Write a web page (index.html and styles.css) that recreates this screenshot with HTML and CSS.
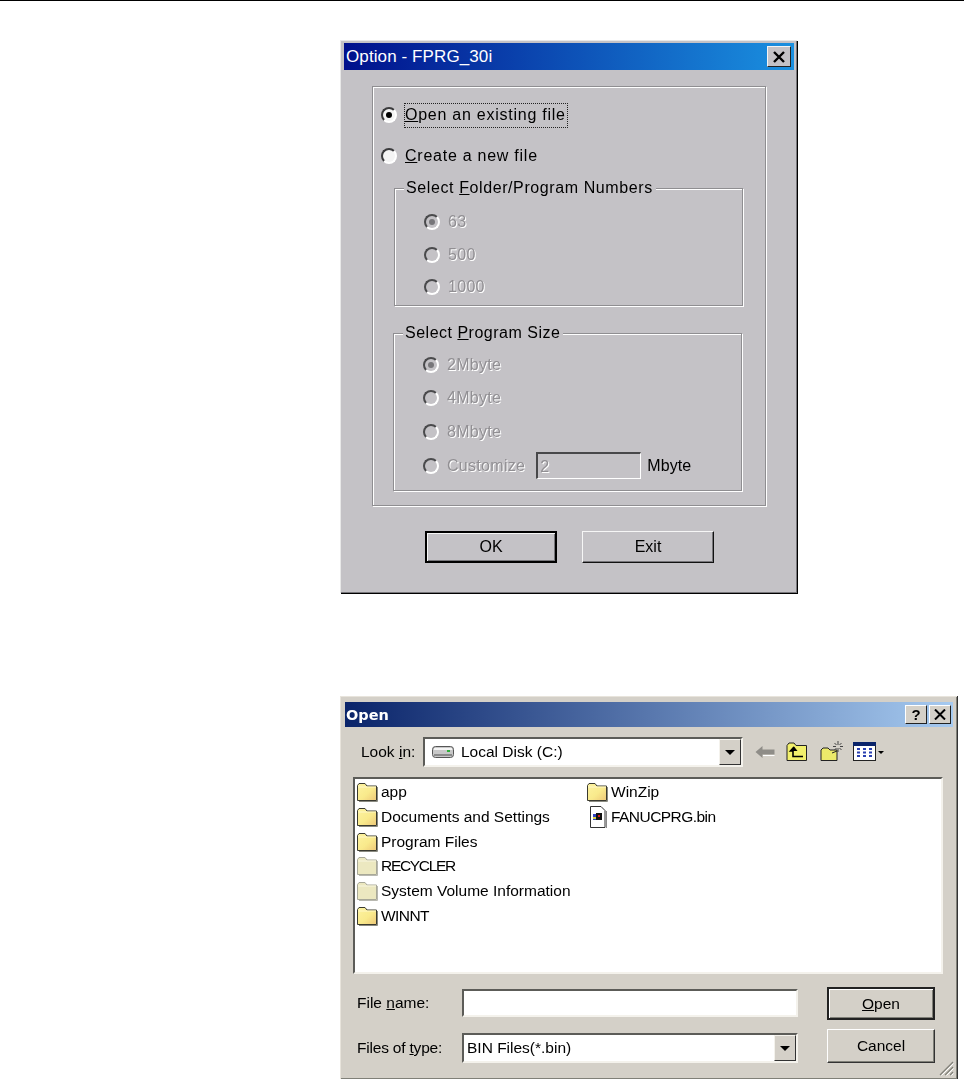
FILE: index.html
```html
<!DOCTYPE html>
<html lang="en">
<head>
    <meta charset="UTF-8">
    <meta name="viewport" content="width=device-width, initial-scale=1.0">
    <title>FPRG_30i dialogs</title>
    <link rel="stylesheet" href="styles.css">
</head>
<body>

<svg class="defs" width="0" height="0">
    <defs>
        <linearGradient id="folder-fill" x1="0" y1="0" x2="1" y2="1">
            <stop offset="0" stop-color="#fdf3a0"/>
            <stop offset="0.55" stop-color="#f9ea8c"/>
            <stop offset="1" stop-color="#eec878"/>
        </linearGradient>
    </defs>
    <symbol id="folder" viewBox="0 0 22 20">
        <path d="M1.5 18.5V3.5L3 1.5H9L11 4H20.5V18.5Z" fill="url(#folder-fill)" stroke="#3a3a30"/>
        <path d="M2 5H20" stroke="#fff8c8"/>
        <path d="M21.5 5V19.5H3" fill="none" stroke="#8a8a80"/>
    </symbol>
    <symbol id="folder-pale" viewBox="0 0 22 20">
        <path d="M1.5 18.5V3.5L3 1.5H9L11 4H20.5V18.5Z" fill="#ece8c0" stroke="#a8a898"/>
        <path d="M2 5H20" stroke="#f8f6e0"/>
        <path d="M21.5 5V19.5H3" fill="none" stroke="#b8b8b0"/>
    </symbol>
</svg>

<div class="top-rule"></div>

<div class="page">
    <div class="option-win">
        <div class="option-title">
            <span>Option - FPRG_30i</span>
            <button class="close-btn" type="button">
                <svg width="14" height="12" viewBox="0 0 14 12"><path d="M2 1L12 11M12 1L2 11" stroke="#000" stroke-width="2.4"/></svg>
            </button>
        </div>

        <div class="option-frame">
            <div class="radio-row top-row">
                <span class="radio checked"></span>
                <span class="focus-label"><u>O</u>pen an existing file</span>
            </div>
            <div class="radio-row top-row second">
                <span class="radio"></span>
                <span class="radio-label"><u>C</u>reate a new file</span>
            </div>

            <fieldset class="group first-group">
                <legend>Select <u>F</u>older/Program Numbers</legend>
                <div class="radio-row off"><span class="radio checked"></span><span>63</span></div>
                <div class="radio-row off"><span class="radio"></span><span>500</span></div>
                <div class="radio-row off"><span class="radio"></span><span>1000</span></div>
            </fieldset>

            <fieldset class="group size-group">
                <legend>Select <u>P</u>rogram Size</legend>
                <div class="radio-row off"><span class="radio checked"></span><span>2Mbyte</span></div>
                <div class="radio-row off"><span class="radio"></span><span>4Mbyte</span></div>
                <div class="radio-row off"><span class="radio"></span><span>8Mbyte</span></div>
                <div class="radio-row off">
                    <span class="radio"></span><span>Customize</span>
                    <span class="size-input">2</span>
                    <span class="size-unit">Mbyte</span>
                </div>
            </fieldset>
        </div>

        <div class="option-buttons">
            <button class="opt-btn default" type="button">OK</button>
            <button class="opt-btn" type="button">Exit</button>
        </div>
    </div>

    <div class="open-win">
        <div class="open-title">
            <span>Open</span>
            <div class="title-btns">
                <button class="cap-btn" type="button">?</button>
                <button class="cap-btn" type="button">
                    <svg width="12" height="11" viewBox="0 0 12 11"><path d="M1 0.5L11 10.5M11 0.5L1 10.5" stroke="#000" stroke-width="2"/></svg>
                </button>
            </div>
        </div>

        <div class="look-row">
            <span class="look-label">Look <u>i</u>n:</span>
            <div class="combo look-combo">
                <svg class="drive" width="23" height="14" viewBox="0 0 23 14">
                    <rect x="0.5" y="1.5" width="21" height="11" rx="3" fill="#c8c8c8" stroke="#555"/>
                    <path d="M2 4H20" stroke="#f4f4f4" stroke-width="2"/>
                    <path d="M2 10H20" stroke="#8a8a8a" stroke-width="2"/>
                    <rect x="15" y="5" width="3" height="2" fill="#2fae3a"/>
                </svg>
                <span class="combo-text">Local Disk (C:)</span>
                <span class="combo-arrow"></span>
            </div>
            <div class="tools">
                <svg class="tool back" width="20" height="14" viewBox="0 0 20 14">
                    <path d="M0.5 7L7.5 1V4.5H19.5V9.5H7.5V13Z" fill="#8f8d88"/>
                    <path d="M8 10.5H19.5" stroke="#fff"/>
                </svg>
                <svg class="tool up" width="22" height="20" viewBox="0 0 22 20">
                    <path d="M1 18.5V3.5L3 1H8L10 3.5H20.5V18.5Z" fill="#f2f06c" stroke="#222"/>
                    <path d="M8 5L4.5 9H7V14.5H17" fill="none" stroke="#000" stroke-width="1.6"/>
                    <path d="M4 9L8 4.5L11.5 9Z" fill="#000"/>
                </svg>
                <svg class="tool new" width="23" height="22" viewBox="0 0 23 22">
                    <path d="M1 20.5V10L3 8H8L10 10H17V20.5Z" fill="#ecea6a" stroke="#222"/>
                    <path d="M17 11L12 13" stroke="#222"/>
                    <path d="M18 1V5M18 8V12M13 6.5H16M20 6.5H23M14.5 3L16.5 5M21.5 3L19.5 5M14.5 10L16.5 8M21.5 10L19.5 8" stroke="#444"/>
                </svg>
                <svg class="tool view" width="31" height="20" viewBox="0 0 31 20">
                    <rect x="0.5" y="0.5" width="22" height="18" fill="#fff" stroke="#222"/>
                    <rect x="0" y="0" width="23" height="4" fill="#0a246a"/>
                    <path d="M4 7H7M10 7H13M16 7H19M4 10.5H7M10 10.5H13M16 10.5H19M4 14H7M10 14H13M16 14H19" stroke="#2a40b0" stroke-width="2"/>
                    <path d="M25 9H31L28 12Z" fill="#000"/>
                </svg>
            </div>
        </div>

        <div class="file-list">
            <div class="file-item"><svg class="file-icon" width="22" height="20"><use href="#folder"/></svg>app</div>
            <div class="file-item"><svg class="file-icon" width="22" height="20"><use href="#folder"/></svg>Documents and Settings</div>
            <div class="file-item"><svg class="file-icon" width="22" height="20"><use href="#folder"/></svg>Program Files</div>
            <div class="file-item tighter"><svg class="file-icon" width="22" height="20"><use href="#folder-pale"/></svg>RECYCLER</div>
            <div class="file-item"><svg class="file-icon" width="22" height="20"><use href="#folder-pale"/></svg>System Volume Information</div>
            <div class="file-item tight"><svg class="file-icon" width="22" height="20"><use href="#folder"/></svg>WINNT</div>
            <div class="file-item"><svg class="file-icon" width="22" height="20"><use href="#folder"/></svg>WinZip</div>
            <div class="file-item tight">
                <svg class="file-icon" width="22" height="22" viewBox="0 0 22 22">
                    <path d="M4.5 0.5H15L19 4.5V21.5H4.5Z" fill="#fff" stroke="#333"/>
                    <path d="M20.5 5V22.5H6" fill="none" stroke="#888"/>
                    <rect x="7" y="8" width="4" height="6" fill="#3040c0"/>
                    <rect x="10" y="7" width="6" height="7" fill="#111"/>
                    <rect x="12" y="9" width="2" height="2" fill="#d02020"/>
                    <rect x="7" y="11" width="3" height="2" fill="#d8d040"/>
                </svg>FANUCPRG.bin
            </div>
        </div>

        <div class="bottom">
            <div class="fields">
                <div class="field-row">
                    <span class="field-label">File <u>n</u>ame:</span>
                    <div class="combo name-input"></div>
                </div>
                <div class="field-row">
                    <span class="field-label narrow">Files of <u>t</u>ype:</span>
                    <div class="combo type-combo">
                        <span class="combo-text">BIN Files(*.bin)</span>
                        <span class="combo-arrow"></span>
                    </div>
                </div>
            </div>
            <div class="actions">
                <button class="act-btn default" type="button"><u>O</u>pen</button>
                <button class="act-btn" type="button">Cancel</button>
            </div>
        </div>

        <svg class="grip" width="16" height="16" viewBox="0 0 16 16">
            <path d="M15 2L2 15M15 7L7 15M15 12L12 15" stroke="#808078" stroke-width="1.2"/>
            <path d="M15.5 3.5L3.5 15.5M15.5 8.5L8.5 15.5M15.5 13.5L13.5 15.5" stroke="#fff" stroke-width="1"/>
        </svg>
    </div>
</div>

</body>
</html>
```

FILE: styles.css
```css
* {
    box-sizing: border-box;
}

body {
    margin: 0;
    background-color: #ffffff;
    color: #000;
    font-family: 'Liberation Sans', Arial, sans-serif;
    font-size: 16px;
}

button {
    font-family: inherit;
    color: #000;
    padding: 0;
    margin: 0;
}

.defs {
    display: block;
    height: 0;
}

.top-rule {
    height: 1px;
    background-color: #000;
}

.page {
    display: flex;
    flex-direction: column;
    align-items: flex-start;
    padding: 39px 0 0 340px;
}

/* first dialog */
.option-win {
    width: 457px;
    height: 553px;
    padding: 2px 3px;
    background-color: #c4c2c6;
    border-top: 1px solid #e8e8e8;
    border-left: 1px solid #e8e8e8;
    box-shadow: 1px 1px 0 #000, inset -1px -1px 0 #77767a;
    filter: blur(0.35px);
}

.option-title {
    display: flex;
    align-items: center;
    justify-content: space-between;
    height: 27px;
    padding: 0 3px 0 2px;
    background: linear-gradient(to right, #00108c, #1a90e0);
    color: #fff;
    font-size: 17px;
    letter-spacing: 0.1px;
}

.close-btn {
    display: flex;
    align-items: center;
    justify-content: center;
    width: 24px;
    height: 21px;
    background-color: #c4c2c6;
    border: 1px solid;
    border-color: #f4f4f4 #222 #222 #f4f4f4;
}

.option-frame {
    width: 394px;
    height: 420px;
    margin: 16px 0 0 28px;
    padding: 13px 0 0 8px;
    border: 1px solid #8f8e91;
    box-shadow: 1px 1px 0 #fff, inset 1px 1px 0 #fff;
}

.radio-row {
    display: flex;
    align-items: center;
    gap: 8px;
    height: 30px;
}

.top-row {
    letter-spacing: 0.75px;
}

.top-row.second {
    margin-top: 11px;
}

.radio {
    flex: none;
    width: 16px;
    height: 16px;
    display: flex;
    align-items: center;
    justify-content: center;
    border-radius: 50%;
    border: 2px solid;
    border-color: #3a3a3c #ffffff #ffffff #3a3a3c;
    background-color: #f4f4f4;
}

.radio.checked::after {
    content: "";
    width: 6px;
    height: 6px;
    border-radius: 50%;
    background-color: #000;
}

.focus-label {
    outline: 1px dotted #222;
    padding: 2px 1px 3px 0;
}

.group {
    margin: 0 0 0 13px;
    width: 349px;
    padding: 0;
    border: 1px solid #8f8e91;
    box-shadow: 1px 1px 0 #fff, inset 1px 1px 0 #fff;
}

.group legend {
    margin-left: 9px;
    padding: 0 3px 0 2px;
    line-height: 18px;
    background-color: #c4c2c6;
    letter-spacing: 0.6px;
}

.group .radio-row {
    padding-left: 29px;
}

.first-group {
    margin-top: 8px;
    height: 127px;
    padding-top: 9px;
}

.first-group .radio-row {
    height: 32.5px;
}

.size-group {
    margin: 18px 0 0 12px;
    height: 167px;
    padding-top: 6px;
}

.size-group legend {
    letter-spacing: 0.5px;
}

.size-group .radio-row {
    height: 33.6px;
}

.off {
    color: #918f93;
    text-shadow: 1px 1px 0 #fff;
    letter-spacing: 0.3px;
}

.off .radio {
    background-color: #c4c2c6;
    border-color: #4a4a4c #ffffff #ffffff #4a4a4c;
}

.off .radio.checked::after {
    background-color: #77767a;
}

.size-input {
    width: 105px;
    height: 27px;
    margin-left: 3px;
    padding-left: 2px;
    line-height: 25px;
    border: 2px solid;
    border-color: #48484a #fff #fff #48484a;
    border-right-width: 1px;
    border-bottom-width: 1px;
}

.size-unit {
    color: #000;
    text-shadow: none;
    letter-spacing: 0.1px;
    font-size: 16px;
    margin-left: -2px;
}

.option-buttons {
    display: flex;
    gap: 25px;
    margin: 25px 0 0 81px;
}

.opt-btn {
    width: 132px;
    height: 32px;
    background-color: #c4c2c6;
    font-size: 16px;
    border: 1px solid;
    border-color: #f6f6f6 #111 #111 #f6f6f6;
    box-shadow: inset -1px -1px 0 #77767a;
}

.opt-btn.default {
    border: 2px solid #000;
    box-shadow: inset 1px 1px 0 #f6f6f6, inset -1px -1px 0 #77767a;
}

/* second dialog */
.open-win {
    position: relative;
    width: 617px;
    height: 383px;
    margin-top: 103px;
    padding: 5px 4px 0;
    background-color: #d4d0c8;
    border-top: 1px solid #e8e4dc;
    border-left: 1px solid #e8e4dc;
    box-shadow: 0 1px 0 #333, 1px 0 0 #333, inset -1px -1px 0 #808078;
    font-size: 15.5px;
    filter: blur(0.35px);
}

.open-title {
    display: flex;
    align-items: center;
    justify-content: space-between;
    height: 25px;
    padding: 0 2px 0 1px;
    background: linear-gradient(to right, #0a246a, #a6caf0);
    color: #fff;
    font-family: 'DejaVu Sans', sans-serif;
    font-weight: bold;
    font-size: 14.5px;
}

.title-btns {
    display: flex;
    gap: 2px;
}

.cap-btn {
    display: flex;
    align-items: center;
    justify-content: center;
    width: 22px;
    height: 19px;
    background-color: #d4d0c8;
    border: 1px solid;
    border-color: #fff #222 #222 #fff;
    font-family: 'Liberation Sans', sans-serif;
    font-weight: bold;
    font-size: 15px;
}

.look-row {
    display: flex;
    align-items: center;
    height: 30px;
    margin-top: 10px;
    padding-left: 16px;
}

.look-label {
    width: 62px;
}

.combo {
    display: flex;
    align-items: center;
    background-color: #fff;
    border: 2px solid;
    border-color: #5c5c58 #f4f2ec #f4f2ec #5c5c58;
}

.look-combo {
    width: 320px;
    height: 30px;
    padding-left: 7px;
}

.drive {
    margin-right: 6px;
}

.combo-text {
    flex: 1;
}

.combo-arrow {
    display: flex;
    align-items: center;
    justify-content: center;
    width: 22px;
    align-self: stretch;
    background-color: #d4d0c8;
    border: 1px solid;
    border-color: #f4f2ec #333 #333 #f4f2ec;
}

.combo-arrow::after {
    content: "";
    border-left: 5px solid transparent;
    border-right: 5px solid transparent;
    border-top: 5px solid #000;
}

.tools {
    display: flex;
    align-items: center;
    margin-left: 12px;
}

.tool.up {
    margin-left: 11px;
}

.tool.new {
    margin-left: 12px;
    margin-top: -3px;
}

.tool.view {
    margin-left: 10px;
}

.file-list {
    display: grid;
    grid-template-rows: repeat(6, 24.7px);
    grid-template-columns: 230px auto;
    grid-auto-flow: column;
    justify-content: start;
    width: 590px;
    height: 197px;
    margin: 10px 0 0 8px;
    padding: 1px 0 0 1px;
    background-color: #fff;
    border: 2px solid;
    border-color: #5c5c58 #f4f2ec #f4f2ec #5c5c58;
}

.file-item {
    display: flex;
    align-items: center;
    gap: 3px;
}

.file-item.tight {
    letter-spacing: -0.55px;
}

.file-item.tighter {
    letter-spacing: -1.3px;
}

.file-icon {
    flex: none;
}

.bottom {
    display: flex;
    justify-content: space-between;
    align-items: flex-start;
    width: 582px;
    margin-left: 12px;
}

.fields {
    display: flex;
    flex-direction: column;
    gap: 16px;
    margin-top: 15px;
}

.field-row {
    display: flex;
    align-items: center;
}

.field-label {
    width: 105px;
}

.field-label.narrow {
    letter-spacing: -0.2px;
}

.name-input {
    width: 336px;
    height: 28px;
}

.type-combo {
    width: 336px;
    height: 30px;
    padding-left: 3px;
}

.actions {
    display: flex;
    flex-direction: column;
    gap: 9px;
    margin: 13px 4px 0 0;
}

.act-btn {
    width: 108px;
    height: 34px;
    background-color: #d4d0c8;
    font-size: 15.5px;
    border: 1px solid;
    border-color: #fff #333 #333 #fff;
    box-shadow: inset -1px -1px 0 #808078;
}

.act-btn.default {
    height: 33px;
    border: 2px solid #222;
    box-shadow: inset 1px 1px 0 #fff, inset -1px -1px 0 #808078;
}

.grip {
    position: absolute;
    right: 3px;
    bottom: 3px;
}
```
